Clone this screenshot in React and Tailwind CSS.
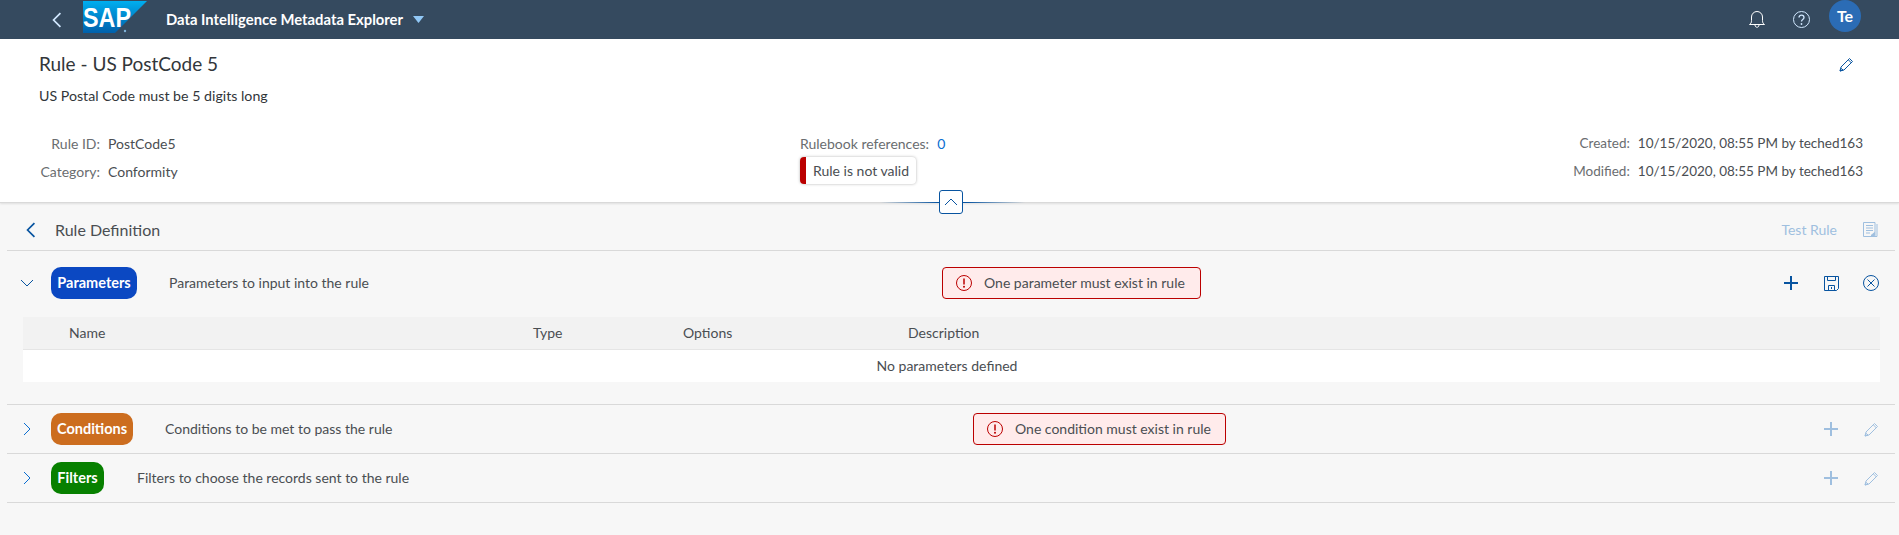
import React from 'react';

const Chevron = ({ dir = 'right', size = 14, color = '#0a6ed1', width = 1 }) => {
  const paths = {
    right: 'M4 1l6 6-6 6',
    left: 'M10 1L4 7l6 6',
    down: 'M1 4l6 6 6-6',
    up: 'M1 10l6-6 6 6',
  };
  return (
    <svg width={size} height={size} viewBox="0 0 14 14" fill="none" stroke={color} strokeWidth={width}>
      <path d={paths[dir]} />
    </svg>
  );
};

const Plus = ({ color = '#0854a0' }) => (
  <svg width="16" height="16" viewBox="0 0 16 16" stroke={color} strokeWidth="2">
    <path d="M8 1v14M1 8h14" />
  </svg>
);

const Pencil = ({ color = '#0854a0' }) => (
  <svg width="15" height="15" viewBox="0 0 15 15" fill="none" stroke={color} strokeWidth="1">
    <path d="M1 14l1-4 8.500-8.500 3 3L5 13z M9.500 3l3 3 M1 14l1.500-2.500 1.500 1.500z" />
  </svg>
);

const SaveIcon = ({ color = '#0854a0' }) => (
  <svg width="15" height="15" viewBox="0 0 15 15" fill="none" stroke={color} strokeWidth="1">
    <path d="M.500.500h14v12l-2 2h-12z M3.500.500v4h8v-4 M4.500 14.500v-5h6v5 M7.500 11v2" />
  </svg>
);

const CloseCircle = ({ color = '#0854a0' }) => (
  <svg width="16" height="16" viewBox="0 0 16 16" fill="none" stroke={color} strokeWidth="1">
    <circle cx="8" cy="8" r="7.500" />
    <path d="M4.500 4.500l7 7M11.500 4.500l-7 7" />
  </svg>
);

const TestDoc = ({ color = '#0854a0' }) => (
  <svg width="15" height="15" viewBox="0 0 15 15" fill="none" stroke={color} strokeWidth="1">
    <path d="M.500.500h11.500v14H.500z M14 2v12.500H7 M3 3.500h7M3 6h7M3 8.500h7M3 11h4" />
    <path d="M8 13.500h3.500v-3z" fill={color} />
  </svg>
);

const ErrorIcon = () => (
  <svg width="16" height="16" viewBox="0 0 16 16" fill="none" stroke="#bb0000">
    <circle cx="8" cy="8" r="7.500" />
    <path d="M8 3.500v6" strokeWidth="1.500" />
    <circle cx="8" cy="11.700" r="1" fill="#bb0000" stroke="none" />
  </svg>
);

const SapLogo = () => (
  <svg width="64" height="32" viewBox="0 0 64 32">
    <defs>
      <linearGradient id="sapBlue" x1="0" y1="0" x2="0" y2="1">
        <stop offset="0" stopColor="#00aeef" />
        <stop offset="1" stopColor="#0060ab" />
      </linearGradient>
    </defs>
    <polygon points="0,0 64,0 32,32 0,32" fill="url(#sapBlue)" />
    <text x="0" y="26" fill="#ffffff" fontSize="27" fontWeight="700" fontFamily="'Liberation Sans', sans-serif" textLength="48" lengthAdjust="spacingAndGlyphs">SAP</text>
    <circle cx="42" cy="30" r="1.200" fill="#7fb2d9" />
  </svg>
);

const Meta = ({ label, labelWidth, children }) => (
  <div className="flex items-center h-7 gap-2">
    <span className="text-right text-[#6a6d70]" style={{ width: labelWidth }}>{label}</span>
    <span className="text-[#4a4e52]">{children}</span>
  </div>
);

const ErrorBox = ({ className, children }) => (
  <div className={`flex items-center h-8 pl-[13px] gap-3 border border-[#bb0000] rounded bg-[#ffebeb] text-[#4a4e52] ${className}`}>
    <ErrorIcon />
    <span>{children}</span>
  </div>
);

const Pill = ({ className, children }) => (
  <div className={`flex items-center justify-center h-8 rounded-[10px] text-white font-bold text-[14.500px] shrink-0 ${className}`}>
    {children}
  </div>
);

const IconSlot = ({ children }) => (
  <div className="flex items-center justify-center w-10">{children}</div>
);

const RowActions = ({ children }) => (
  <div className="flex items-center ml-auto pr-1">{children}</div>
);

const DisabledActions = () => (
  <RowActions>
    <IconSlot><Plus color="#9fbfdf" /></IconSlot>
    <IconSlot><Pencil color="#9fbfdf" /></IconSlot>
  </RowActions>
);

export default function App() {
  return (
    <div className="flex flex-col h-screen overflow-hidden bg-[#f7f7f7] text-sm text-[#4a4e52] font-['Lato',sans-serif]">
      <header className="flex items-center h-[39px] shrink-0 bg-[#354a5f]">
        <div className="flex justify-center w-[83px] pl-[31px]">
          <Chevron dir="left" size={16} color="#d1e8ff" width={1.5} />
        </div>
        <div className="self-start pt-px">
          <SapLogo />
        </div>
        <span className="ml-[19px] font-bold text-white text-[14.800px]">Data Intelligence Metadata Explorer</span>
        <svg className="ml-[10px]" width="11" height="7" viewBox="0 0 11 7">
          <polygon points="0,0 11,0 5.500,7" fill="#91c8f6" />
        </svg>
        <div className="flex items-center ml-auto pr-[38px]">
          <svg width="16" height="17" viewBox="0 0 16 17" fill="none" stroke="#ffffff">
            <path d="M.500 13.500c1.500-1 2-2 2-4V6a5.500 5.500 0 0 1 11 0v3.500c0 2 .500 3 2 4z M6 14c0 3 4 3 4 0" />
          </svg>
          <svg className="ml-7" width="17" height="17" viewBox="0 0 17 17" fill="none" stroke="#d1e8ff">
            <circle cx="8.500" cy="8.500" r="8" />
            <path d="M6 6.500c0-3.200 5-3.200 5 0 0 2-2.500 2-2.500 4" strokeWidth="1.300" />
            <circle cx="8.500" cy="13" r=".9" fill="#d1e8ff" stroke="none" />
          </svg>
          <div className="flex items-center justify-center w-8 h-8 ml-[19px] -mt-[7px] rounded-full bg-[#2b6cb5] text-white font-bold text-base">
            Te
          </div>
        </div>
      </header>

      <section className="relative flex flex-col h-[164px] shrink-0 pt-[11px] bg-white border-b border-[#d9d9d9] shadow-[0_1px_2px_rgba(0,0,0,0.1)]">
        <div className="flex items-center justify-between pl-[39px] pr-[45px]">
          <h1 className="text-[19px] leading-7 font-normal text-[#32363a]">Rule - US PostCode 5</h1>
          <Pencil />
        </div>
        <p className="mt-2 pl-[39px] leading-5 text-[#32363a] text-[14.200px]">US Postal Code must be 5 digits long</p>
        <div className="flex mt-6">
          <div className="w-[800px] shrink-0">
            <Meta label="Rule ID:" labelWidth={100}>PostCode5</Meta>
            <Meta label="Category:" labelWidth={100}>Conformity</Meta>
          </div>
          <div>
            <div className="flex items-center h-7 gap-2 text-[#6a6d70]">
              Rulebook references:
              <span className="text-[#0a6ed1]">0</span>
            </div>
            <div className="flex w-fit h-[27px] -mt-px rounded bg-white shadow-[0_0_3px_rgba(0,0,0,0.3)] overflow-hidden">
              <div className="w-[6px] bg-[#bb0000]" />
              <span className="px-[7px] leading-[27px]">Rule is not valid</span>
            </div>
          </div>
          <div className="ml-auto pr-9 text-[13.500px]">
            <Meta label="Created:" labelWidth={120}>10/15/2020, 08:55 PM by teched163</Meta>
            <Meta label="Modified:" labelWidth={120}>10/15/2020, 08:55 PM by teched163</Meta>
          </div>
        </div>
        <div className="absolute left-[880px] top-[163px] w-[145px] h-px bg-[linear-gradient(90deg,transparent,#0854a0_40%,#0854a0_60%,transparent)]" />
        <button className="absolute left-[939px] top-[151px] flex items-center justify-center w-6 h-6 rounded-[3px] bg-white border border-[#0854a0]">
          <Chevron dir="up" color="#0854a0" />
        </button>
      </section>

      <main className="flex-1 ml-[7px] mr-1">
        <div className="flex items-center h-12 pt-[6px] pl-4 border-b border-[#d9d9d9]">
          <Chevron dir="left" size={16} color="#0854a0" width={1.500} />
          <span className="ml-4 text-base">Rule Definition</span>
          <div className="flex items-center ml-auto pr-[17px]">
            <span className="text-[#9fbfdf]">Test Rule</span>
            <div className="ml-[26px]"><TestDoc color="#9fbfdf" /></div>
          </div>
        </div>

        <div className="pt-4 pb-[22px] border-b border-[#d9d9d9]">
          <div className="flex items-center">
            <div className="flex w-[44px] pl-[13px]"><Chevron dir="down" color="#0854a0" /></div>
            <Pill className="w-[86px] bg-[#0b48c2]">Parameters</Pill>
            <div className="w-[772px] ml-[32px]">Parameters to input into the rule</div>
            <ErrorBox className="w-[259px] ml-px">One parameter must exist in rule</ErrorBox>
            <RowActions>
              <IconSlot><Plus /></IconSlot>
              <IconSlot><SaveIcon /></IconSlot>
              <IconSlot><CloseCircle /></IconSlot>
            </RowActions>
          </div>
          <div className="mt-[18px] ml-4 mr-[15px]">
            <div className="grid grid-cols-[464px_150px_225px_1fr] items-center h-[33px] pl-[46px] bg-[#f2f2f2] border-b border-[#e5e5e5]">
              <span>Name</span>
              <span>Type</span>
              <span>Options</span>
              <span>Description</span>
            </div>
            <div className="flex items-center justify-center h-8 pr-[9px] bg-white">No parameters defined</div>
          </div>
        </div>

        <div className="flex items-center py-2 border-b border-[#d9d9d9]">
          <div className="flex w-[44px] pl-[13px]"><Chevron /></div>
          <Pill className="w-[82px] bg-[#cc6d1f]">Conditions</Pill>
          <div className="w-[808px] ml-8">Conditions to be met to pass the rule</div>
          <ErrorBox className="w-[253px]">One condition must exist in rule</ErrorBox>
          <DisabledActions />
        </div>

        <div className="flex items-center py-2 border-b border-[#d9d9d9]">
          <div className="flex w-[44px] pl-[13px]"><Chevron /></div>
          <Pill className="w-[53px] bg-[#078000]">Filters</Pill>
          <div className="ml-[33px]">Filters to choose the records sent to the rule</div>
          <DisabledActions />
        </div>
      </main>
    </div>
  );
}
